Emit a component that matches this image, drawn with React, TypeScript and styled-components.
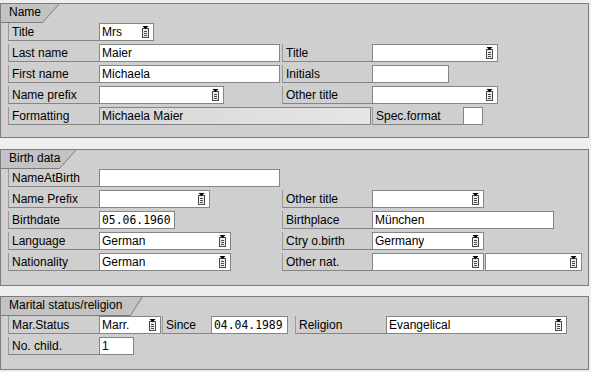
import React from "react";
import styled, { createGlobalStyle } from "styled-components";

const Global = createGlobalStyle`
  html, body { margin: 0; padding: 0; background: #efefef; }
  body { font-family: "Liberation Sans", Arial, sans-serif; font-size: 12px; color: #000; }
`;

const Page = styled.div`
  width: 591px;
  height: 372px;
  overflow: hidden;
  display: flex;
  flex-direction: column;
`;

const Frame = styled.section<{ $mt: number; $h: number }>`
  box-sizing: border-box;
  width: 589px;
  height: ${(p) => p.$h}px;
  margin-top: ${(p) => p.$mt}px;
  background: #cfcfcf;
  border: 1px solid #7c7c7c;
  display: flex;
  flex-direction: column;
`;

const TabBox = styled.div<{ $w: number }>`
  position: relative;
  width: ${(p) => p.$w}px;
  height: 20px;
  margin: -1px 0 0 -1px;
  flex-shrink: 0;
`;

const TabShape = styled.svg`
  position: absolute;
  left: 0;
  top: 0;
`;

const TabText = styled.span`
  position: relative;
  display: block;
  padding-left: 9px;
  line-height: 19px;
  white-space: nowrap;
`;

const Rows = styled.div`
  display: flex;
  flex-direction: column;
  gap: 3px;
  padding-left: 7px;
`;

const Row = styled.div`
  display: flex;
  height: 18px;
`;

const Label = styled.div<{ $w: number; $ml?: number }>`
  box-sizing: border-box;
  width: ${(p) => p.$w}px;
  height: 18px;
  margin-left: ${(p) => p.$ml ?? 0}px;
  border-bottom: 1px solid #858585;
  border-left: 1px solid #9a9a9a;
  padding-left: 3px;
  line-height: 18px;
  white-space: nowrap;
  flex-shrink: 0;
`;

const Field = styled.div<{ $w: number; $ml?: number; $mono?: boolean }>`
  box-sizing: border-box;
  width: ${(p) => p.$w}px;
  height: 18px;
  margin-left: ${(p) => p.$ml ?? 0}px;
  background: #fff;
  border: 1px solid #858585;
  display: flex;
  align-items: center;
  justify-content: space-between;
  padding: ${(p) => (p.$mono ? "0 0 0 2px" : "0 3px 0 2px")};
  white-space: nowrap;
  flex-shrink: 0;
  font-family: ${(p) =>
    p.$mono ? '"DejaVu Sans Mono", "Liberation Mono", monospace' : "inherit"};
  font-size: ${(p) => (p.$mono ? "11.4px" : "12px")};
  line-height: 16px;
`;

const Display = styled(Field)`
  background: linear-gradient(to right, #d6d6d6, #e6e6e6);
`;

const FieldText = styled.span`
  overflow: hidden;
`;

const F4 = () => (
  <svg width="9" height="12" viewBox="0 0 9 12" style={{ flexShrink: 0 }}>
    <rect x="1.5" y="2.5" width="6" height="9" fill="#ececec" stroke="#4a4a4a" />
    <path d="M3 5.5h3M3 7.5h3M3 9.5h3" stroke="#4a4a4a" strokeWidth="1" />
    <polygon points="1.5,0 7.5,0 4.5,3.2" fill="#000" />
  </svg>
);

const Tab: React.FC<{ top: number; bottom: number; children: React.ReactNode }> = ({
  top,
  bottom,
  children,
}) => (
  <TabBox $w={top}>
    <TabShape width={top} height={20}>
      <polygon
        points={`0.5,0.5 ${top - 0.5},0.5 ${bottom - 0.5},19.5 0.5,19.5`}
        fill="#c3c3c3"
        stroke="#7c7c7c"
      />
    </TabShape>
    <TabText>{children}</TabText>
  </TabBox>
);

type FProps = { w: number; ml?: number; f4?: boolean; mono?: boolean; value?: string };
const Input: React.FC<FProps> = ({ w, ml, f4, mono, value }) => (
  <Field $w={w} $ml={ml} $mono={mono}>
    <FieldText>{value ?? ""}</FieldText>
    {f4 && <F4 />}
  </Field>
);

export default function App() {
  return (
    <>
      <Global />
      <Page>
        <Frame $mt={3} $h={135}>
          <Tab top={60} bottom={43}>Name</Tab>
          <Rows>
            <Row>
              <Label $w={91}>Title</Label>
              <Input w={55} f4 value="Mrs" />
            </Row>
            <Row>
              <Label $w={91}>Last name</Label>
              <Input w={181} value="Maier" />
              <Label $w={90} $ml={2}>Title</Label>
              <Input w={126} f4 />
            </Row>
            <Row>
              <Label $w={91}>First name</Label>
              <Input w={181} value="Michaela" />
              <Label $w={90} $ml={2}>Initials</Label>
              <Input w={77} />
            </Row>
            <Row>
              <Label $w={91}>Name prefix</Label>
              <Input w={125} f4 />
              <Label $w={90} $ml={58}>Other title</Label>
              <Input w={126} f4 />
            </Row>
            <Row>
              <Label $w={91}>Formatting</Label>
              <Display $w={272}>
                <FieldText>Michaela Maier</FieldText>
              </Display>
              <Label $w={91} $ml={1}>Spec.format</Label>
              <Input w={20} />
            </Row>
          </Rows>
        </Frame>

        <Frame $mt={11} $h={137}>
          <Tab top={77} bottom={60}>Birth data</Tab>
          <Rows>
            <Row>
              <Label $w={91}>NameAtBirth</Label>
              <Input w={181} />
            </Row>
            <Row>
              <Label $w={91}>Name Prefix</Label>
              <Input w={111} f4 />
              <Label $w={90} $ml={72}>Other title</Label>
              <Input w={112} f4 />
            </Row>
            <Row>
              <Label $w={91}>Birthdate</Label>
              <Input w={76} mono value="05.06.1960" />
              <Label $w={90} $ml={107}>Birthplace</Label>
              <Input w={182} value="München" />
            </Row>
            <Row>
              <Label $w={91}>Language</Label>
              <Input w={132} f4 value="German" />
              <Label $w={90} $ml={51}>Ctry o.birth</Label>
              <Input w={112} f4 value="Germany" />
            </Row>
            <Row>
              <Label $w={91}>Nationality</Label>
              <Input w={132} f4 value="German" />
              <Label $w={90} $ml={51}>Other nat.</Label>
              <Input w={112} f4 />
              <Input w={97} ml={1} f4 />
            </Row>
          </Rows>
        </Frame>

        <Frame $mt={10} $h={74}>
          <Tab top={143} bottom={131}>Marital status/religion</Tab>
          <Rows>
            <Row>
              <Label $w={91}>Mar.Status</Label>
              <Input w={62} f4 value="Marr." />
              <Label $w={49} $ml={1}>Since</Label>
              <Input w={77} mono value="04.04.1989" />
              <Label $w={91} $ml={7}>Religion</Label>
              <Input w={181} f4 value="Evangelical" />
            </Row>
            <Row>
              <Label $w={91}>No. child.</Label>
              <Input w={35} value="1" />
            </Row>
          </Rows>
        </Frame>
      </Page>
    </>
  );
}
